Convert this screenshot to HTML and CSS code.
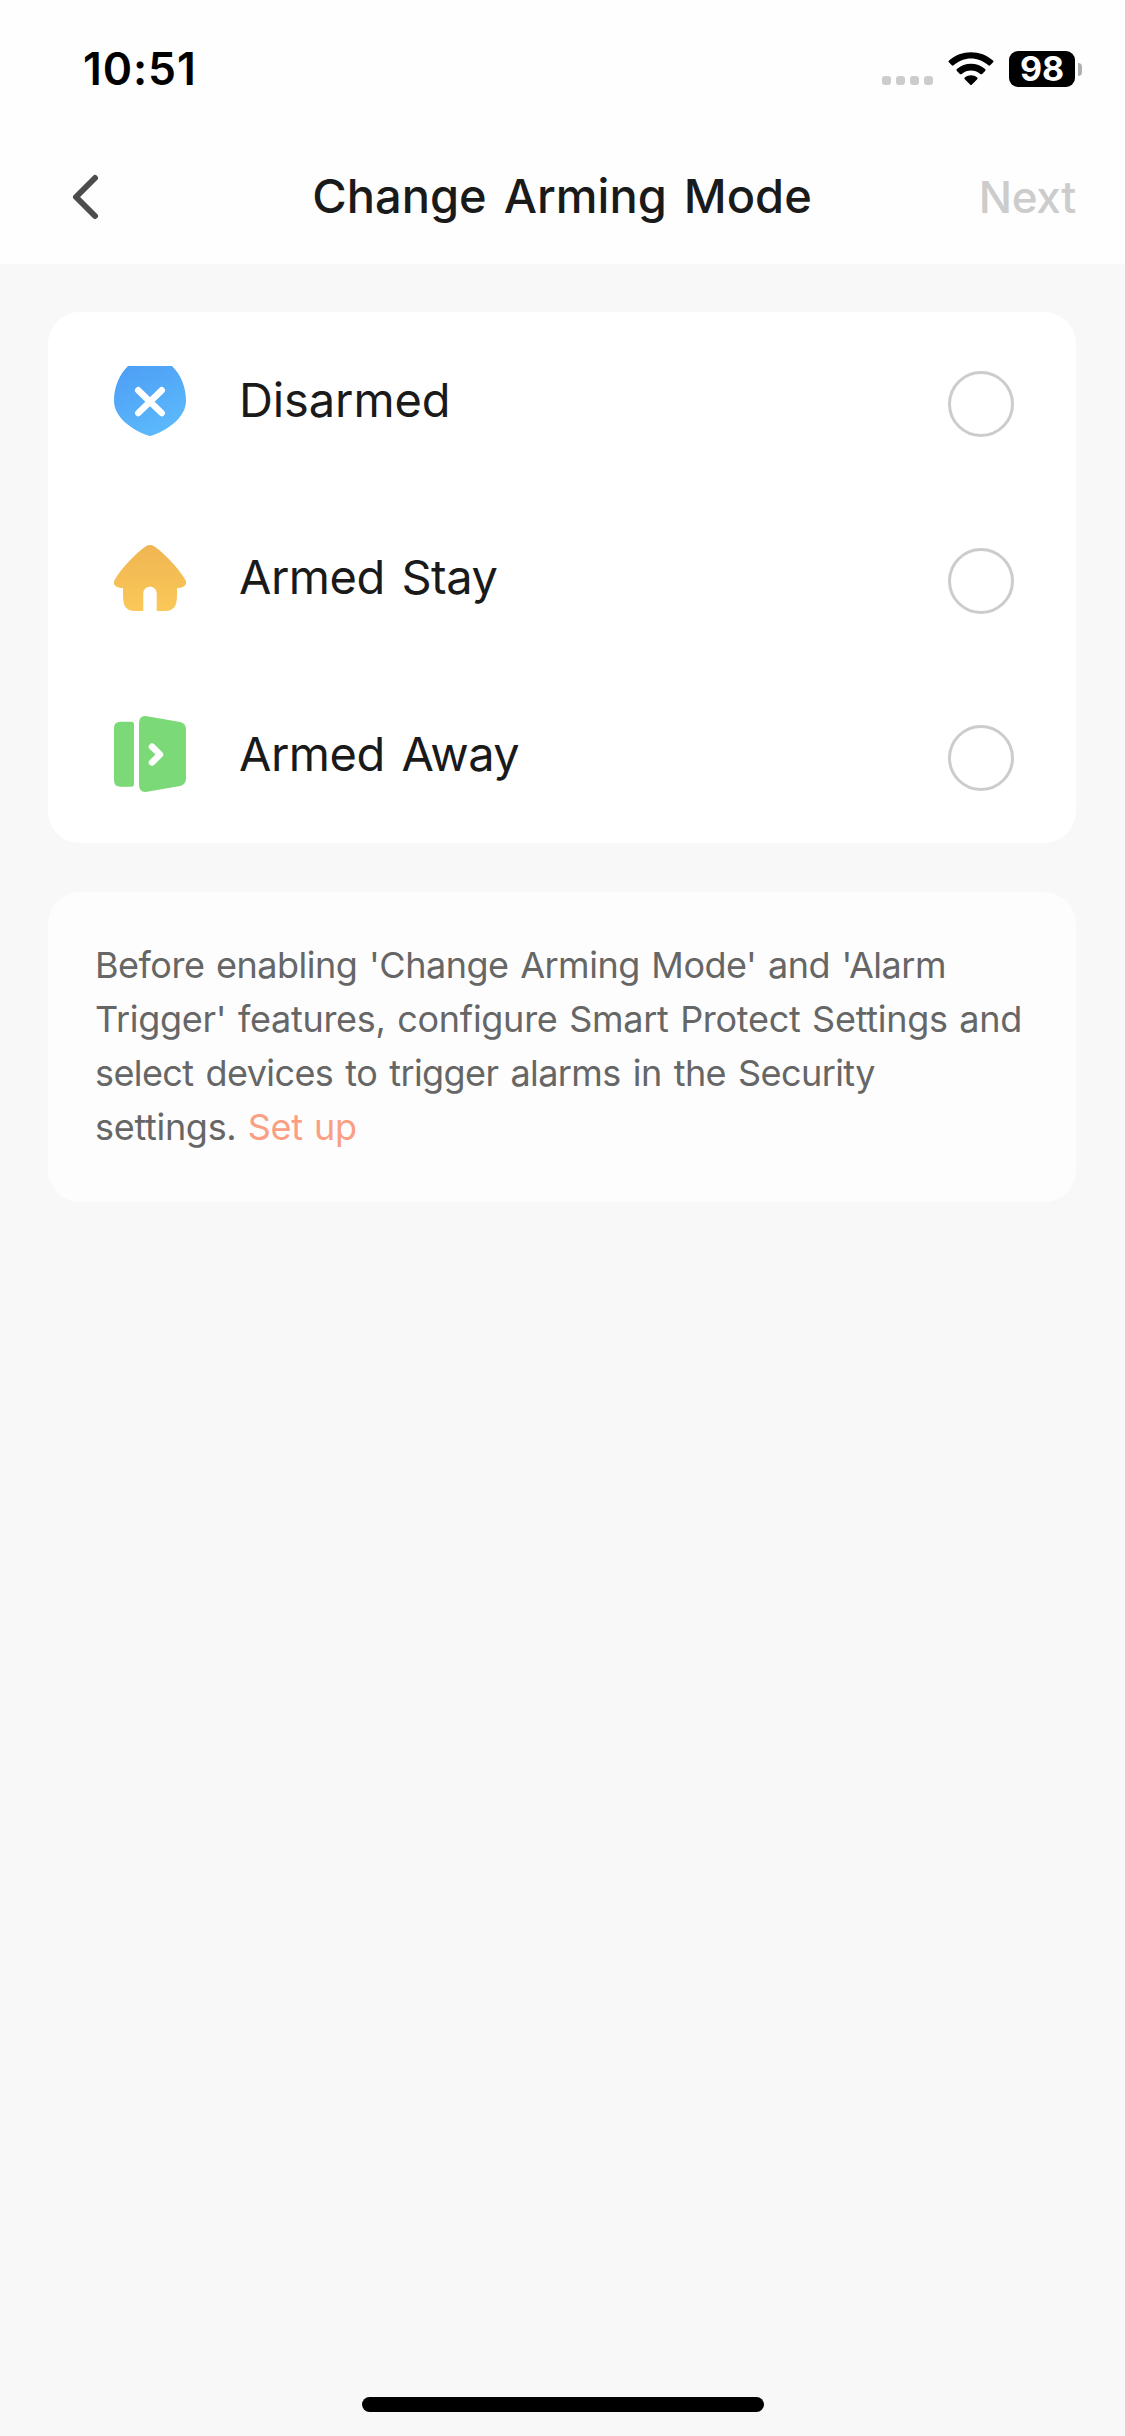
FILE: index.html
```html
<!DOCTYPE html>
<html lang="en">
<head>
<meta charset="utf-8">
<title>Change Arming Mode</title>
<link rel="stylesheet" href="styles.css">
</head>
<body>
<div class="screen">
  <header class="top">
    <div class="status">
      <span class="time">10:51</span>
      <div class="indicators">
        <div class="signal"><i></i><i></i><i></i><i></i></div>
        <svg class="wifi" width="46" height="34" viewBox="0 0 46 34">
          <path d="M1 8.600C13-2.600 33-2.600 45 8.600c.6.600.6 1.100.1 1.700l-2.900 3c-.6.600-1.200.600-1.800 0-10-9.200-24.800-9.200-34.800 0-.6.600-1.200.600-1.800 0l-2.900-3C.4 9.700.4 9.200 1 8.600z"/>
          <path d="M8.900 17.100c8-7.300 20.200-7.300 28.200 0 .6.600.6 1.200 0 1.800l-3 3c-.6.600-1.200.600-1.800 0-5.400-4.600-13.200-4.600-18.600 0-.6.600-1.200.600-1.800 0l-3-3c-.6-.6-.6-1.200 0-1.800z"/>
          <path d="M16.800 25.400c3.600-3 8.800-3 12.400 0 .6.600.6 1.200 0 1.800l-5.200 5.200c-.7.700-1.300.700-2 0l-5.200-5.200c-.6-.6-.6-1.200 0-1.800z"/>
        </svg>
        <div class="battery"><span class="level">98</span><i class="nub"></i></div>
      </div>
    </div>
    <nav class="nav">
      <svg class="back" width="30" height="50" viewBox="0 0 30 50"><path d="M25 6L6 25l19 19"/></svg>
      <h1 class="title">Change Arming Mode</h1>
      <span class="next">Next</span>
    </nav>
  </header>
  <main class="content">
    <section class="card modes">
      <div class="mode">
        <svg class="icon" width="72" height="70" viewBox="0 0 72 70">
          <defs><linearGradient id="blue" x1="0" y1="0" x2=".5" y2="1"><stop offset="0" stop-color="#4d9df5"/><stop offset="1" stop-color="#5bb8fb"/></linearGradient></defs>
          <path fill="url(#blue)" d="M14 0H58C67 9 72 21 72 35C72 51 54 64 38.500 69.300Q36 70.500 33.500 69.300C18 64 0 51 0 35C0 21 5 9 14 0Z"/>
          <path class="mark" d="M24.300 24.300L47.700 47M47.700 24.300L24.300 47"/>
        </svg>
        <span class="label single">Disarmed</span><i class="radio"></i>
      </div>
      <div class="mode">
        <svg class="icon" width="72" height="66" viewBox="0 0 72 66">
          <defs><linearGradient id="amber" x1="0" y1="0" x2="0" y2="1"><stop offset="0" stop-color="#f0b552"/><stop offset="1" stop-color="#fac858"/></linearGradient></defs>
          <path fill="url(#amber)" d="M32 1.200Q36-1.100 40 1.200C51 8.500 65 24 71 34.300C74 39.500 70.500 43 63 43V50C63 61 60 66 51 66H42.700V48.500C42.700 39.500 29.300 39.500 29.300 48.500V66H21C12 66 9 61 9 50V43C1.500 43-2 39.500 1 34.300C7 24 21 8.500 32 1.200Z"/>
        </svg>
        <span class="label">Armed Stay</span><i class="radio"></i>
      </div>
      <div class="mode">
        <svg class="icon door" width="72" height="76" viewBox="0 0 72 76">
          <path fill="#7bd977" d="M6.500 5.700H17.500Q20 5.700 20 8.500V68Q20 70.700 17.500 70.700H6.500Q0 70.700 0 64.500V12Q0 5.700 6.500 5.700Z"/>
          <path fill="#7bd977" d="M25 7.500Q25-1 33 .2L66 6Q72 7.300 72 13.500V62.500Q72 68.700 66 70L33 75.800Q25 77 25 68.500Z"/>
          <path class="mark" d="M38 30.700L46 38.500L38 46.500"/>
        </svg>
        <span class="label">Armed Away</span><i class="radio"></i>
      </div>
    </section>
    <section class="card note">
      <p class="text"><span class="line l1">Before enabling 'Change Arming Mode' and 'Alarm</span> <span class="line l2">Trigger' features, configure Smart Protect Settings and</span> <span class="line l3">select devices to trigger alarms in the Security</span> <span class="line l4">settings. <a class="link">Set up</a></span></p>
    </section>
  </main>
  <div class="home"></div>
</div>
</body>
</html>
```
FILE: styles.css
```css
* { box-sizing: border-box; }
body { margin: 0; background: #f8f8f8; font-family: Inter, "Liberation Sans", sans-serif; color: #1a1a1a; }
.screen { display: flex; flex-direction: column; width: 1125px; height: 2436px; overflow: hidden; }
.top { height: 264px; background: #fefefe; flex: none; }
.status { display: flex; justify-content: space-between; height: 132px; padding: 0 43px 0 83px; }
.time { margin-top: 42px; font-size: 44.5px; line-height: 54px; font-weight: 600; letter-spacing: 0.9px; color: #000; }
.indicators { display: flex; align-items: flex-start; }
.signal { display: flex; gap: 5px; margin: 76px 15px 0 0; }
.signal i { width: 9px; height: 9px; border-radius: 3px; background: #ccc; }
.wifi { margin: 52px 15px 0 0; fill: #000; }
.battery { display: flex; align-items: center; gap: 3px; margin-top: 51px; }
.level { width: 66px; height: 36px; border-radius: 9px; background: #000; color: #fff; font-size: 34px; line-height: 36px; font-weight: 700; text-align: center; }
.nub { width: 4px; height: 13px; border-radius: 0 4px 4px 0; background: #b0b0b0; }
.nav { display: grid; grid-template-columns: 178px 1fr 200px; align-items: center; height: 128px; padding: 0 49px 0 70px; }
.back { margin-top: 2px; fill: none; stroke: #4c4c4c; stroke-width: 6; stroke-linecap: round; stroke-linejoin: round; }
.title { margin: 0; font-size: 47px; line-height: 56px; font-weight: 500; word-spacing: 4.5px; text-align: center; white-space: nowrap; }
.next { margin-top: 1px; font-size: 44px; line-height: 56px; font-weight: 500; letter-spacing: -0.3px; color: #ccc; text-align: right; }
.content { display: flex; flex-direction: column; gap: 49px; padding: 48px 49px 0 48px; flex: 1; }
.card { border-radius: 32px; background: #fff; }
.mode { display: flex; align-items: center; height: 177px; padding: 0 62px 0 66px; }
.icon { flex: none; margin-top: 1px; }
.door { margin-top: -1px; }
.mark { fill: none; stroke: #fff; stroke-width: 6.5; stroke-linecap: round; stroke-linejoin: round; }
.label { flex: 1; margin: -2px 0 0 53px; font-size: 47px; line-height: 58px; letter-spacing: -0.5px; word-spacing: 4px; white-space: nowrap; }
.single { letter-spacing: -0.1px; }
.radio { width: 66px; height: 66px; margin-top: 7px; border: 3px solid #ccc; border-radius: 50%; }
.note { height: 310px; padding: 46px 47px; background: #fdfdfd; }
.text { margin: 0; font-size: 36px; line-height: 54px; color: #666; }
.line { display: block; white-space: nowrap; }
.l1 { letter-spacing: -0.48px; word-spacing: 1.9px; }
.l2 { letter-spacing: -0.28px; word-spacing: 1.8px; }
.l3 { letter-spacing: -0.6px; word-spacing: 2.6px; }
.l4 { letter-spacing: -0.3px; word-spacing: 1.5px; }
.link { color: #fa9f83; }
.home { width: 402px; height: 15px; margin: 0 auto 24px; border-radius: 8px; background: #000; flex: none; }
```
